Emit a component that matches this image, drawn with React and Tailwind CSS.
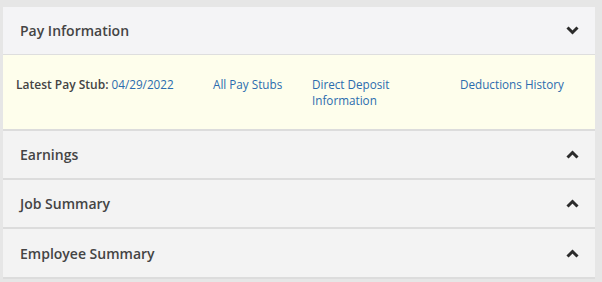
import React from "react";

const Down = () => (
  <svg width="13" height="9" viewBox="0 0 13 9" className="text-[#2b2b2b]">
    <path d="M1.5 1.5 L6.5 6.5 L11.5 1.5" fill="none" stroke="currentColor" strokeWidth="3" strokeLinejoin="miter" />
  </svg>
);
const Up = () => (
  <svg width="13" height="9" viewBox="0 0 13 9" className="text-[#2b2b2b]">
    <path d="M1.5 7.5 L6.5 2.5 L11.5 7.5" fill="none" stroke="currentColor" strokeWidth="3" strokeLinejoin="miter" />
  </svg>
);

function Header({ title, icon, h = "h-[47px]", bg = "bg-[#f3f3f3]" }) {
  return (
    <div className={`${h} ${bg} flex items-center justify-between pl-[17px] pr-[16px]`}>
      <span className="text-[14px] font-semibold text-[#444]">{title}</span>
      {icon}
    </div>
  );
}

export default function App() {
  return (
    <div
      className="w-[602px] h-[282px] bg-[#e6e6e6] pt-[7px] pl-[3px] pr-[7px] overflow-hidden"
      style={{ fontFamily: '"Open Sans", sans-serif' }}
    >
      <div className="flex flex-col">
        <div className="border-b border-[#dedede]">
          <Header title="Pay Information" icon={<Down />} bg="bg-[#f4f4f6]" />
        </div>
        <div className="h-[76px] bg-[#fefeec] border-b-2 border-[#dcdcdc] flex pl-[13px] pt-[21px] text-[11.7px] leading-[16px] text-[#2b6cae]">
          <div className="w-[197px]">
            <span className="font-semibold text-[#444] text-[12px]">Latest Pay Stub: </span>
            <span>04/29/2022</span>
          </div>
          <div className="w-[99px]">All Pay Stubs</div>
          <div className="w-[148px]"><div className="w-[100px]">Direct Deposit Information</div></div>
          <div>Deductions History</div>
        </div>
        <div className="border-b-2 border-[#dcdcdc]">
          <Header title="Earnings" icon={<Up />} />
        </div>
        <div className="border-b-2 border-[#dcdcdc]">
          <Header title="Job Summary" icon={<Up />} />
        </div>
        <div className="border-b-2 border-[#dcdcdc]">
          <Header title="Employee Summary" icon={<Up />} h="h-[48px]" />
        </div>
      </div>
    </div>
  );
}
